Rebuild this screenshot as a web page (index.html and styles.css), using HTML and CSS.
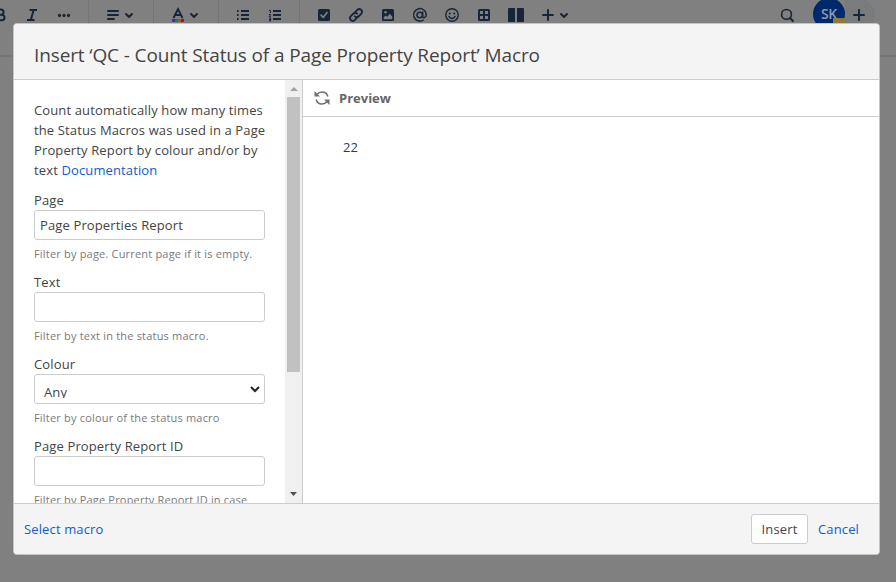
FILE: index.html
```html
<!DOCTYPE html>
<html lang="en">
<head>
  <meta charset="UTF-8" />
  <title>Insert Macro</title>
  <link rel="stylesheet" href="styles.css">
</head>
<body>
<!-- editor toolbar -->
<div class="toolbar">
  <div class="tool"><svg width="24" height="24" viewBox="0 0 24 24"><path d="M9 6.5h4a2.6 2.6 0 010 5.2H9zM9 11.7h4.7a2.7 2.7 0 010 5.6H9z" fill="none" stroke="currentColor" stroke-width="2"/></svg></div>
  <div class="tool"><svg width="24" height="24" viewBox="0 0 24 24"><path d="M9.5 6.9H17M7 17.1h7.5M13.6 7l-2.8 10" fill="none" stroke="currentColor" stroke-width="2"/></svg></div>
  <div class="tool"><svg width="24" height="24" viewBox="0 0 24 24"><g fill="currentColor"><circle cx="7.5" cy="12.4" r="1.6"/><circle cx="12" cy="12.4" r="1.6"/><circle cx="16.5" cy="12.4" r="1.6"/></g></svg></div>
  <div class="sep"></div>
  <div class="tool wide">
    <svg width="24" height="24" viewBox="0 0 24 24"><path d="M7 8h10M7 12h10M7 16h6" fill="none" stroke="currentColor" stroke-width="2" stroke-linecap="round"/></svg>
    <svg class="chev" width="10" height="24" viewBox="0 0 10 24"><path d="M2 11l3 3 3-3" fill="none" stroke="currentColor" stroke-width="2" stroke-linecap="round" stroke-linejoin="round"/></svg>
  </div>
  <div class="sep"></div>
  <div class="tool wide">
    <svg width="24" height="24" viewBox="0 0 24 24"><path d="M7.500 15l4.500-9 4.500 9M9.500 12h5" fill="none" stroke="currentColor" stroke-width="1.900"/><path fill="#403294" d="M6 16h3v3H7a1 1 0 01-1-1z"/><path fill="#007a90" d="M9 16h3v3H9z"/><path fill="#a35e00" d="M12 16h3v3h-3z"/><path fill="#a01800" d="M15 16h3v2a1 1 0 01-1 1h-2z"/></svg>
    <svg class="chev" width="10" height="24" viewBox="0 0 10 24"><path d="M2 11l3 3 3-3" fill="none" stroke="currentColor" stroke-width="2" stroke-linecap="round" stroke-linejoin="round"/></svg>
  </div>
  <div class="sep gap"></div>
  <div class="tool"><svg width="24" height="24" viewBox="0 0 24 24"><path d="M10 8h8M10 12h8M10 16h8M6 8h1.600M6 12h1.600M6 16h1.600" fill="none" stroke="currentColor" stroke-width="2"/></svg></div>
  <div class="tool"><svg width="24" height="24" viewBox="0 0 24 24"><path d="M10 8h8M10 12h8M10 16h8" fill="none" stroke="currentColor" stroke-width="2"/><path d="M6 7.300h1.300V10M6 11.500h1.700l-1.500 2.200h1.700M6 15h1.600v3H6m0-1.500h1.500" fill="none" stroke="currentColor"/></svg></div>
  <div class="sep gap"></div>
  <div class="tool"><svg width="24" height="24" viewBox="0 0 24 24"><rect x="6" y="6" width="12" height="12" rx="1.5" fill="currentColor"/><path d="M9 12.200l2.200 2.300 3.800-5" fill="none" stroke="#808080" stroke-width="1.7" stroke-linecap="round" stroke-linejoin="round"/></svg></div>
  <div class="tool"><svg width="24" height="24" viewBox="0 0 24 24"><g transform="rotate(-45 12 12)" fill="none" stroke="currentColor" stroke-width="1.800" stroke-linecap="round"><path d="M12.500 14.600H7.500a2.700 2.700 0 010-5.400h3.500a2.700 2.700 0 012.700 2.700"/><path d="M11.500 9.400H16.500a2.700 2.700 0 010 5.400h-3.500a2.700 2.700 0 01-2.700-2.700"/></g></svg></div>
  <div class="tool"><svg width="24" height="24" viewBox="0 0 24 24"><rect x="6" y="6" width="12" height="12" rx="1.5" fill="currentColor"/><g fill="#808080"><circle cx="9.500" cy="9.300" r="1.300"/><path d="M7.700 16.200v-2l2-1.700 1.500 1.200 2.600-2.900 2.500 2.600v2.800z"/></g></svg></div>
  <div class="tool"><svg width="24" height="24" viewBox="0 0 24 24"><g fill="none" stroke="currentColor" stroke-width="1.5"><circle cx="11.800" cy="12" r="2.800"/><path d="M14.600 9v4.200c0 2.200 3.600 2 3.600-1.400a6.300 6.300 0 10-3 5.400" stroke-linecap="round"/></g></svg></div>
  <div class="tool"><svg width="24" height="24" viewBox="0 0 24 24"><circle cx="12" cy="12" r="6.200" fill="none" stroke="currentColor" stroke-width="1.400"/><g fill="currentColor"><circle cx="9.800" cy="10.400" r="1"/><circle cx="14.200" cy="10.400" r="1"/></g><path d="M8.900 13.400c1.200 2.700 5 2.700 6.200 0" fill="none" stroke="currentColor" stroke-width="1.400" stroke-linecap="round"/></svg></div>
  <div class="tool"><svg width="24" height="24" viewBox="0 0 24 24"><rect x="6" y="6" width="12" height="12" rx="1.5" fill="currentColor"/><path fill="#808080" d="M8 8h3v3H8zM13 8h3v3h-3zM8 13h3v3H8zM13 13h3v3h-3z"/></svg></div>
  <div class="tool"><svg width="24" height="24" viewBox="0 0 24 24"><path fill="currentColor" d="M5 5h6v14H5a1 1 0 01-1-1V6a1 1 0 011-1zM13 5h6a1 1 0 011 1v12a1 1 0 01-1 1h-6z"/></svg></div>
  <div class="tool wide plus">
    <svg width="24" height="24" viewBox="0 0 24 24"><path d="M12 7v10M7 12h10" fill="none" stroke="currentColor" stroke-width="2" stroke-linecap="round"/></svg>
    <svg class="chev" width="10" height="24" viewBox="0 0 10 24"><path d="M2 11l3 3 3-3" fill="none" stroke="currentColor" stroke-width="2" stroke-linecap="round" stroke-linejoin="round"/></svg>
  </div>
  <div class="tools-right">
    <div class="search"><svg width="24" height="24" viewBox="0 0 24 24"><g fill="none" stroke="currentColor" stroke-width="1.600"><circle cx="11.500" cy="11.400" r="4.900"/><path d="M15 15l3 3" stroke-width="2" stroke-linecap="round"/></g></svg></div>
    <div class="avatar">SK<span class="presence"></span></div>
    <div class="invite"><svg width="24" height="24" viewBox="0 0 24 24"><path d="M12 7v10M7 12h10" fill="none" stroke="currentColor" stroke-width="2" stroke-linecap="round"/></svg></div>
  </div>
</div>

<!-- macro dialog -->
<div class="dialog">
  <h2 class="dialog-title">Insert ‘QC - Count Status of a Page Property Report’ Macro</h2>
  <div class="dialog-body">
    <div class="params">
      <div class="params-form">
        <p class="desc">Count automatically how many times<br>the Status Macros was used in a Page<br>Property Report by colour and/or by<br>text <a href="#">Documentation</a></p>
        <div class="field">
          <label>Page</label>
          <div class="input">Page Properties Report</div>
          <div class="hint">Filter by page. Current page if it is empty.</div>
        </div>
        <div class="field">
          <label>Text</label>
          <div class="input"></div>
          <div class="hint">Filter by text in the status macro.</div>
        </div>
        <div class="field">
          <label>Colour</label>
          <div class="input select"><span>Any</span><svg width="12" height="8" viewBox="0 0 12 8"><path d="M2 2l4 4 4-4" fill="none" stroke="#222" stroke-width="2"/></svg></div>
          <div class="hint">Filter by colour of the status macro</div>
        </div>
        <div class="field">
          <label>Page Property Report ID</label>
          <div class="input"></div>
          <div class="hint">Filter by Page Property Report ID in case</div>
        </div>
      </div>
      <div class="scrollbar">
        <svg width="17" height="17" viewBox="0 0 17 17"><path d="M5 11h8L9 7z" fill="#a3a3a3"/></svg>
        <div class="thumb"></div>
        <svg class="down" width="17" height="17" viewBox="0 0 17 17"><path d="M5 6h7L8.500 10z" fill="#505050"/></svg>
      </div>
    </div>
    <div class="preview">
      <div class="preview-head">
        <svg width="16" height="16" viewBox="0 0 16 16"><g fill="none" stroke="#707070" stroke-width="1.500"><path d="M3 4.500C6 .6 12.500 1 13.800 6.500"/><path d="M13 11.500C10 15.400 3.500 15 2.200 9.500"/></g><path fill="#707070" d="M.5 1v5.500H6zM15.500 15V9.500H10z"/></svg>
        <strong>Preview</strong>
      </div>
      <div class="preview-body">22</div>
    </div>
  </div>
  <div class="dialog-footer">
    <a class="select-macro" href="#">Select macro</a>
    <button class="insert">Insert</button>
    <a class="cancel" href="#">Cancel</a>
  </div>
</div>
</body>
</html>
```
FILE: styles.css
```css
* { margin: 0; padding: 0; box-sizing: border-box; }
html, body { height: 100%; overflow: hidden; }
body {
  background: #808080; color: #444;
  font-family: "Open Sans", "Noto Sans", sans-serif;
  font-size: 13px; line-height: 20px; letter-spacing: .13px;
}
a { color: #0f5cd0; text-decoration: none; }
svg { display: block; flex: none; }

.toolbar {
  display: flex; height: 57px; padding-bottom: 27px;
  border-bottom: 2px solid #757575; color: #172538;
}
.tool {
  width: 32px; height: 30px; flex: none;
  display: flex; align-items: center; justify-content: center;
}
.tool:first-child { margin-left: -16px; }
.tool.wide { width: 49px; justify-content: flex-start; padding-left: 5px; }
.tool.wide .chev { margin-left: -1px; }
.tool.plus { padding-left: 4px; }
.sep { width: 8px; height: 28px; flex: none; border-left: 1px solid #757575; margin-left: 8px; }
.sep.gap { margin-right: 1px; }
.tools-right { margin-left: auto; display: flex; height: 30px; align-items: center; padding-right: 21px; }
.search { margin-right: 14px; }
.avatar {
  position: relative; width: 32px; height: 32px; border-radius: 50%;
  margin-top: -2px; background: #00296b; color: #8f9bb0;
  font-size: 14px; font-weight: 600; line-height: 32px; text-align: center;
  letter-spacing: -.3px;
}
.presence {
  position: absolute; left: 20px; top: 20px;
  width: 13px; height: 12px; background: #8f7a3c;
}
.invite {
  width: 30px; height: 32px; padding-right: 2px; border-radius: 0 16px 16px 0; background: #7a7b7d;
  display: flex; align-items: center; justify-content: center;
}

.dialog {
  position: absolute; left: 13px; top: 23px;
  width: 867px; height: 532px; overflow: hidden;
  display: flex; flex-direction: column;
  background: #fff; border: 1px solid #c4c4c4; border-radius: 4px;
}
.dialog-title {
  height: 56px; flex: none; padding: 0 20px; line-height: 62px;
  background: #f4f4f4; border-bottom: 1px solid #ccc;
  font-size: 19px; font-weight: 400; letter-spacing: -.12px; white-space: nowrap;
}
.dialog-body { display: flex; flex: 1; min-height: 0; }
.params { width: 289px; display: flex; border-right: 1px solid #ccc; overflow: hidden; }
.params-form { width: 271px; padding: 20px; white-space: nowrap; }
.desc { margin-bottom: 10px; }
.field { height: 82px; }
.field label { display: block; }
.input {
  width: 231px; height: 30px; padding: 0 5px; line-height: 28px;
  border: 1px solid #ccc; border-radius: 3px; background: #fff;
}
.select { display: flex; justify-content: space-between; padding: 4px 3px 4px 9px; }
.select span { height: 19px; line-height: 26px; overflow: hidden; }
.select svg { margin-top: 6px; }
.hint { padding-top: 4px; font-size: 11px; letter-spacing: .19px; color: #7a7a7a; }
.scrollbar {
  width: 17px; flex: none; background: #f0f0f0;
  display: flex; flex-direction: column;
}
.thumb { height: 275px; margin: 0 2px; background: #c1c1c1; }
.scrollbar .down { margin-top: auto; }

.preview { flex: 1; }
.preview-head {
  height: 37px; padding-left: 11px; border-bottom: 1px solid #ccc;
  display: flex; align-items: center; color: #666;
}
.preview-head strong { margin-left: 9px; letter-spacing: 0; }
.preview-body { padding: 20px 40px; color: #2c3e5e; }

.dialog-footer {
  height: 51px; flex: none; padding: 0 20px 0 10px;
  display: flex; align-items: center;
  background: #f4f4f4; border-top: 1px solid #ccc;
}
.insert {
  width: 57px; height: 30px; margin: 0 10px 0 auto;
  background: #fff; border: 1px solid #ccc; border-radius: 3px;
  font: inherit; letter-spacing: .2px; color: #444;
}
```
